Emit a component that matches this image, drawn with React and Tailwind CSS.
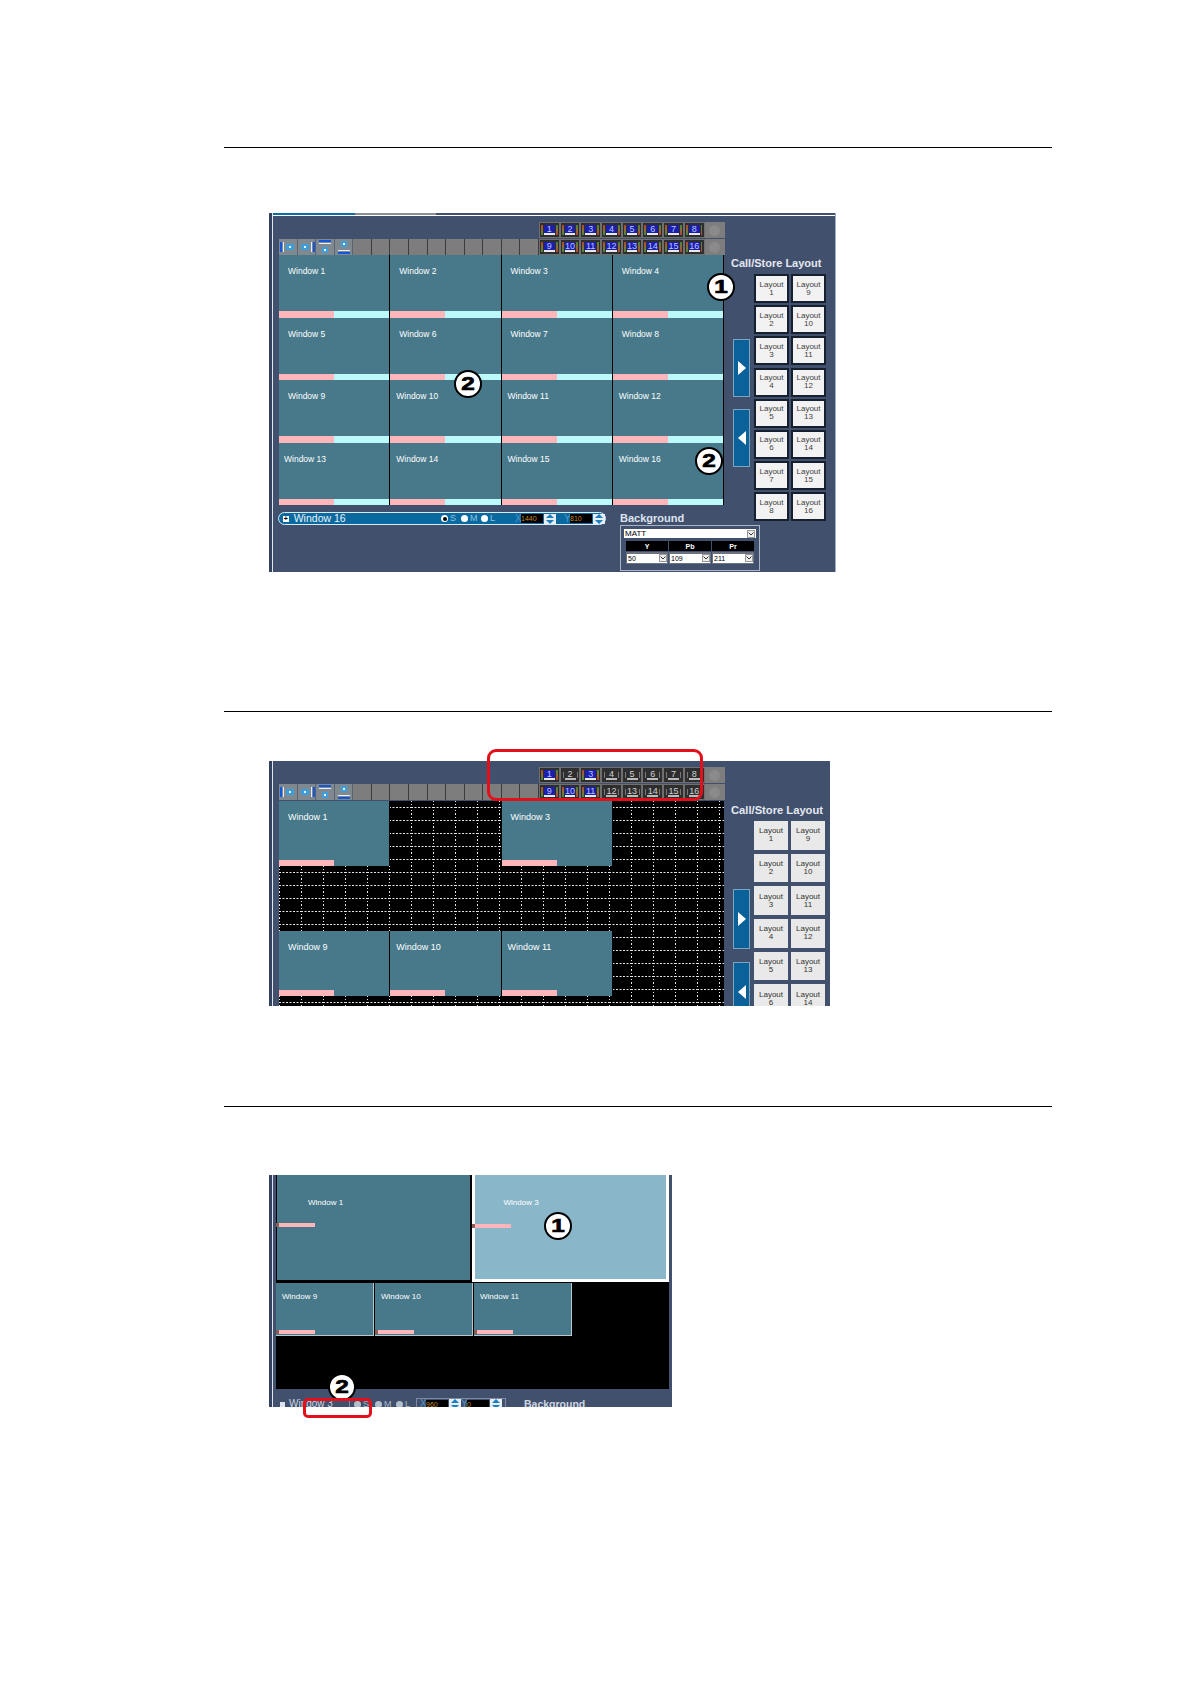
import React from "react";

const NUMS = [1, 2, 3, 4, 5, 6, 7, 8, 9, 10, 11, 12, 13, 14, 15, 16];
const LAYOUTS = [1, 9, 2, 10, 3, 11, 4, 12, 5, 13, 6, 14, 7, 15, 8, 16];

const NumButton = ({ n, active }) => (
  <div className="w-[20.7px] h-[16px] bg-[#6f6f6f] p-px">
    <div className="flex h-full items-stretch justify-center gap-px bg-[#2e2e2e] px-px py-[2px]">
      {active ? (
        <div className="w-[2px] bg-linear-to-b from-[#b8402f] to-[#2f8a3c]" />
      ) : (
        <div className="my-[2px] w-px bg-[#777]" />
      )}
      <div
        className={`flex w-[11px] items-center justify-center border-b-2 text-[9px] leading-none ${
          active ? "border-[#e8e8e8] bg-[#1c1eae] text-[#b9c5ff]" : "border-[#bbb] bg-[#2e2e2e] text-[#d0d0d0]"
        }`}
      >
        {n}
      </div>
      {active ? (
        <div className="w-[2px] bg-linear-to-b from-[#2f8a3c] to-[#b8402f]" />
      ) : (
        <div className="my-[2px] w-px bg-[#777]" />
      )}
    </div>
  </div>
);

const NumGrid = ({ activeSet }) => (
  <div className="grid w-[187px] grid-cols-[repeat(9,20.7px)] gap-y-px">
    {NUMS.slice(0, 8).map((n) => (
      <NumButton key={n} n={n} active={activeSet.includes(n)} />
    ))}
    <GrayKnob />
    {NUMS.slice(8).map((n) => (
      <NumButton key={n} n={n} active={activeSet.includes(n)} />
    ))}
    <GrayKnob />
  </div>
);

const GrayKnob = () => (
  <div className="flex h-[16px] w-[20.7px] items-center justify-center bg-[#7d7d7d]">
    <div className="h-[11px] w-[11px] rounded-full bg-[#8a8a8a]" />
  </div>
);

const ToolIcon = ({ kind }) => (
  <svg width="18" height="16" viewBox="0 0 18 16" className="bg-[#808890]">
    {kind === 0 && (
      <>
        <rect x="1" y="3" width="2" height="10" fill="#1557d8" />
        <rect x="4" y="3" width="1" height="10" fill="#e8eef5" />
        <rect x="7" y="5" width="8" height="6" fill="#3f9ed8" />
        <rect x="10" y="7" width="2" height="2" fill="#e8f4ff" />
      </>
    )}
    {kind === 1 && (
      <>
        <rect x="15" y="3" width="2" height="10" fill="#1557d8" />
        <rect x="13" y="3" width="1" height="10" fill="#e8eef5" />
        <rect x="3" y="5" width="8" height="6" fill="#3f9ed8" />
        <rect x="6" y="7" width="2" height="2" fill="#e8f4ff" />
      </>
    )}
    {kind === 2 && (
      <>
        <rect x="3" y="1" width="12" height="2" fill="#1557d8" />
        <rect x="3" y="4" width="12" height="1" fill="#e8eef5" />
        <rect x="6" y="8" width="6" height="6" fill="#3f9ed8" />
        <rect x="8" y="10" width="2" height="2" fill="#e8f4ff" />
      </>
    )}
    {kind === 3 && (
      <>
        <rect x="6" y="2" width="6" height="6" fill="#3f9ed8" />
        <rect x="8" y="4" width="2" height="2" fill="#e8f4ff" />
        <rect x="3" y="11" width="12" height="1" fill="#e8eef5" />
        <rect x="3" y="13" width="12" height="2" fill="#1557d8" />
      </>
    )}
  </svg>
);

const Toolbar = () => (
  <div className="flex h-[16px] w-[260px] bg-[#7d7d7d]">
    {[0, 1, 2, 3].map((k) => (
      <div key={k} className="h-full w-[18.57px] shrink-0 overflow-hidden border-r border-[#5b6370]">
        <ToolIcon kind={k} />
      </div>
    ))}
    {[...Array(10)].map((_, i) => (
      <div key={i} className="h-full w-[18.57px] shrink-0 border-r border-[#3c3c3c]" />
    ))}
  </div>
);

const WindowCell = ({ name, pad, split, size }) => (
  <div className="flex flex-col justify-between border-r border-black bg-[#47798a]">
    <div className={`pt-[11px] leading-[10px] text-white ${pad} ${size}`}>{name}</div>
    <div className="flex h-[6.5px]">
      <div className="h-full w-1/2 bg-[#ffb6ba]" />
      {split && <div className="h-full w-1/2 bg-[#bcf9fb]" />}
    </div>
  </div>
);

const Triangle = ({ left }) => (
  <svg width="8" height="14" viewBox="0 0 8 14">
    <polygon points={left ? "8,0 0,7 8,14" : "0,0 8,7 0,14"} fill="#fff" />
  </svg>
);

const ArrowButton = ({ left, className }) => (
  <div className={`flex w-[17px] items-center justify-center border border-[#7da4bd] bg-[#0b629b] ${className}`}>
    <Triangle left={left} />
  </div>
);

const LayoutButton = ({ n, dark }) => (
  <div
    className={`flex flex-col items-center justify-center text-[8px] leading-[8px] ${
      dark
        ? "h-[29px] w-[35px] border-2 border-[#16202e] bg-[#f2f2f2] text-[#3f3f3f]"
        : "h-[28.7px] w-[34px] bg-[#e9e9e9] text-[#333]"
    }`}
  >
    <span>Layout</span>
    <span>{n}</span>
  </div>
);

const Spinner = () => (
  <svg width="12" height="10" viewBox="0 0 12 10" className="bg-[#e6eef3]">
    <polygon points="6,0 10,4 2,4" fill="#1b7fc0" />
    <polygon points="2,6 10,6 6,10" fill="#1b7fc0" />
  </svg>
);

const Radio = ({ label, checked, muted }) => (
  <div className="flex items-center gap-[2px]">
    <div
      className={`flex h-[7px] w-[7px] items-center justify-center rounded-full ${
        muted ? "bg-[#b4bfce]" : "bg-white"
      }`}
    >
      {checked && !muted && <div className="h-[4px] w-[4px] rounded-full bg-black" />}
    </div>
    <span className={`w-[8px] text-[9px] leading-none ${muted ? "text-[#aebbcc]" : "text-[#8fc3e0]"}`}>{label}</span>
  </div>
);

const CoordField = ({ label, value }) => (
  <div className="flex items-center">
    <span className="w-[5px] text-[10px] leading-none text-[#4f95c6]">{label}</span>
    <div className="ml-[1px] flex h-[9px] w-[22px] items-center bg-black text-[7px] leading-none text-[#c5892a]">{value}</div>
    <div className="ml-[1px]">
      <Spinner />
    </div>
  </div>
);

const Chevron = () => (
  <div className="flex h-[8px] w-[8px] items-center justify-center border border-[#999] bg-[#eee]">
    <svg width="6" height="4" viewBox="0 0 6 4">
      <polyline points="0.5,0.5 3,3 5.5,0.5" fill="none" stroke="#333" strokeWidth="1" />
    </svg>
  </div>
);

const BackgroundBox = () => (
  <div className="ml-[14px] mt-[8px] w-[140px] shrink-0">
    <div className="text-[11px] font-bold leading-[11px] text-[#dde3ef]">Background</div>
    <div className="mt-[1px] h-[46px] border border-[#a9b4c6] px-[3px] pt-[3px]">
      <div className="flex h-[9px] items-center justify-between bg-white pl-[1px] pr-[1px] text-[8px] leading-none text-black">
        <span>MATT</span>
        <Chevron />
      </div>
      <div className="mt-[3px] grid grid-cols-3 gap-[1px] px-[2px]">
        {["Y", "Pb", "Pr"].map((h) => (
          <div key={h} className="flex h-[10px] items-center justify-center bg-black text-[7px] font-bold leading-none text-white">
            {h}
          </div>
        ))}
        {["50", "109", "211"].map((v) => (
          <div key={v} className="flex h-[12px] items-center bg-[#6b7280] px-[1px]">
            <div className="flex h-[9px] w-full items-center justify-between bg-white pl-[1px] text-[7px] leading-none text-black">
              <span>{v}</span>
              <Chevron />
            </div>
          </div>
        ))}
      </div>
    </div>
  </div>
);

const StatusBar = () => (
  <div className="-ml-px mt-[7px] flex h-[13px] w-[328px] shrink-0 items-center rounded-full border border-[#d7ecf6] bg-[#0a699f] pl-[4px]">
    <div className="flex h-[6px] w-[6px] items-center justify-center bg-white text-[7px] font-bold leading-none text-black">+</div>
    <span className="ml-[5px] w-[155px] text-[10.5px] leading-none text-[#e9f4fa]">Window 16</span>
    <div className="flex gap-[3px]">
      <Radio label="S" checked />
      <Radio label="M" />
      <Radio label="L" />
    </div>
    <div className="ml-[17px] flex gap-[8px]">
      <CoordField label="X" value="1440" />
      <CoordField label="Y" value="810" />
    </div>
  </div>
);

const CallStore = ({ dark, titleClass, arrowTop, firstArrow, secondArrow, gridClass }) => (
  <div className="w-[100px] shrink-0">
    <div className={`whitespace-nowrap font-bold leading-[12px] text-[#e4e8f0] ${titleClass}`}>Call/Store Layout</div>
    <div className="flex">
      <div className={`ml-[2px] w-[17px] shrink-0 ${arrowTop}`}>
        <ArrowButton className={firstArrow} />
        <ArrowButton left className={secondArrow} />
      </div>
      <div className={`ml-[4px] grid shrink-0 grid-cols-[34px_34px] gap-x-[3px] ${gridClass}`}>
        {LAYOUTS.map((n) => (
          <LayoutButton key={n} n={n} dark={dark} />
        ))}
      </div>
    </div>
  </div>
);

const Callout = ({ n, className }) => (
  <div className={`absolute flex h-[28px] w-[28px] items-center justify-center rounded-full border-2 border-black bg-white ${className}`}>
    <span className="inline-block scale-x-[1.35] text-[18px] font-bold leading-none text-black [-webkit-text-stroke:0.7px_black]">{n}</span>
  </div>
);

const PanelEdge = () => (
  <>
    <div className="w-[3px] shrink-0 bg-[#33425f]" />
    <div className="w-px shrink-0 bg-[#dfe6ee]" />
  </>
);

const PanelOne = () => {
  const rows = [
    [["Window 1", "pl-[9px]"], ["Window 2", "pl-[9px]"], ["Window 3", "pl-[9px]"], ["Window 4", "pl-[9px]"]],
    [["Window 5", "pl-[9px]"], ["Window 6", "pl-[9px]"], ["Window 7", "pl-[9px]"], ["Window 8", "pl-[9px]"]],
    [["Window 9", "pl-[9px]"], ["Window 10", "pl-[6px]"], ["Window 11", "pl-[6px]"], ["Window 12", "pl-[6px]"]],
    [["Window 13", "pl-[5px]"], ["Window 14", "pl-[6px]"], ["Window 15", "pl-[6px]"], ["Window 16", "pl-[6px]"]],
  ];
  return (
    <div className="relative ml-[45px] mt-[65px] h-[359px] w-[567px]">
      <div className="flex h-full overflow-hidden border-r border-[#9fb0c4] bg-[#41506d]">
        <PanelEdge />
        <div className="flex min-w-0 flex-1 flex-col">
          <div className="flex h-[2px] shrink-0">
            <div className="ml-0 h-full w-[81px] bg-[#0a6fa6]" />
            <div className="ml-px h-full w-[81px] bg-[#8a8f96]" />
          </div>
          <div className="h-px shrink-0 bg-white" />
          <div className="flex pl-[6px] pt-[6px]">
            <div className="flex w-[452px] shrink-0 flex-col">
              <div className="flex h-[33px] items-end">
                <Toolbar />
                <NumGrid activeSet={NUMS} />
              </div>
              <div className="grid w-[445px] grid-cols-4 grid-rows-[repeat(4,62.5px)]">
                {rows.flat().map(([name, pad]) => (
                  <WindowCell key={name} name={name} pad={pad} split size="text-[8.5px]" />
                ))}
              </div>
              <div className="flex">
                <StatusBar />
                <BackgroundBox />
              </div>
            </div>
            <CallStore
              dark
              titleClass="pt-[35px] text-[11px]"
              arrowTop="pt-[70px]"
              firstArrow="h-[58px]"
              secondArrow="mt-[12px] h-[58px]"
              gridClass="mt-[5px] gap-y-[2.2px]"
            />
          </div>
        </div>
      </div>
      <Callout n="1" className="left-[438px] top-[60px]" />
      <Callout n="2" className="left-[185px] top-[157px]" />
      <Callout n="2" className="left-[426px] top-[234px]" />
    </div>
  );
};

const DotGrid = () => (
  <svg className="absolute inset-0 h-full w-full">
    <defs>
      <pattern id="dots" width="22" height="13" patternUnits="userSpaceOnUse">
        <line x1="0.5" y1="0" x2="0.5" y2="13" stroke="#e6e6e6" strokeDasharray="1 2" />
        <line x1="0" y1="6.5" x2="22" y2="6.5" stroke="#e6e6e6" strokeDasharray="2 1.5" />
      </pattern>
    </defs>
    <rect width="100%" height="100%" fill="url(#dots)" />
  </svg>
);

const PanelTwo = () => {
  const cells = [
    ["Window 1", "pl-[9px]"], null, ["Window 3", "pl-[9px]"], null,
    null, null, null, null,
    ["Window 9", "pl-[9px]"], ["Window 10", "pl-[6px]"], ["Window 11", "pl-[6px]"], null,
  ];
  return (
    <div className="relative ml-[45px] mt-[49px] h-[245px] w-[561px]">
      <div className="flex h-full overflow-hidden bg-[#41506d]">
        <PanelEdge />
        <div className="flex pl-[6px] pt-[6px]">
          <div className="flex w-[452px] shrink-0 flex-col">
            <div className="flex h-[34px] items-start">
              <div className="mt-[17px]">
                <Toolbar />
              </div>
              <NumGrid activeSet={[1, 3, 9, 10, 11]} />
            </div>
            <div className="relative h-[205px] w-[445px] overflow-hidden bg-black">
              <DotGrid />
              <div className="relative grid grid-cols-4 auto-rows-[65px]">
                {cells.map((c, i) =>
                  c ? <WindowCell key={c[0]} name={c[0]} pad={c[1]} size="text-[9px]" /> : <div key={i} />
                )}
              </div>
            </div>
          </div>
          <CallStore
            titleClass="pt-[37px] text-[11.2px]"
            arrowTop="pt-[73px]"
            firstArrow="h-[60px]"
            secondArrow="mt-[13px] h-[60px]"
            gridClass="mt-[5px] gap-y-[4px]"
          />
        </div>
      </div>
      <div className="absolute left-[218px] top-[-12px] h-[52px] w-[216px] rounded-[9px] border-[3px] border-[#e3101c]" />
    </div>
  );
};

const SmallWindow = ({ name, className, barClass }) => (
  <div className={`flex flex-col ${className}`}>
    <div className="text-[8px] leading-[10px] text-white">{name}</div>
    <div className={`mt-auto flex h-[4px] w-[39px] bg-[#ffb6ba] ${barClass}`}>
      <div className="h-full w-[3px] bg-[#8a5f55]" />
    </div>
  </div>
);

const PanelThree = () => (
  <div className="relative ml-[45px] mt-[68px] h-[232px] w-[403px]">
    <div className="flex h-full overflow-hidden bg-[#41506d]">
      <PanelEdge />
      <div className="flex min-w-0 flex-1 flex-col">
        <div className="ml-[3px] mr-[3px] h-[214px] shrink-0 bg-black">
          <div className="flex h-[107px] gap-[2px] pl-px">
            <SmallWindow
              name="Window 1"
              className="h-[105px] w-[193px] bg-[#47798a] pl-[31px] pt-[23px] pb-[53px]"
              barClass="-ml-[32px]"
            />
            <SmallWindow
              name="Window 3"
              className="h-[107px] w-[198px] border-[3px] border-t-0 border-white bg-[#89b6c9] pl-[29px] pt-[23px] pb-[51px]"
              barClass="-ml-[32px]"
            />
          </div>
          <div className="mt-px flex h-[53px] gap-px">
            {["Window 9", "Window 10", "Window 11"].map((w) => (
              <SmallWindow
                key={w}
                name={w}
                className="w-[98px] border-r border-b border-[#b9c7cf] bg-[#47798a] pl-[6px] pt-[9px] pb-px"
                barClass="-ml-[6px]"
              />
            ))}
          </div>
        </div>
        <div className="mt-[9px] flex h-[12px] shrink-0 items-center overflow-visible pl-[7px] text-[#cfd6e2]">
          <div className="h-[5px] w-[5px] bg-[#dde3ef]" />
          <span className="ml-[4px] w-[50px] text-[10px] leading-none">Window 3</span>
          <div className="ml-[10px] flex gap-[4px] border-l border-[#7f8aa0] pl-[4px]">
            <Radio label="S" checked muted />
            <Radio label="M" muted />
            <Radio label="L" muted />
          </div>
          <div className="ml-[3px] flex border border-[#7f8aa0] px-[3px]">
            <CoordField label="X" value="960" />
            <CoordField label="Y" value="0" />
          </div>
          <span className="ml-[18px] text-[10.5px] font-bold leading-none">Background</span>
        </div>
      </div>
    </div>
    <Callout n="1" className="left-[275px] top-[37px]" />
    <Callout n="2" className="left-[59px] top-[198px]" />
    <div className="absolute left-[34px] top-[223px] h-[20px] w-[69px] rounded-[5px] border-[3px] border-[#e3101c]" />
  </div>
);

const App = () => {
  return (
    <div className="h-[1684px] w-[1191px] overflow-hidden bg-white pl-[224px] pt-[147px] font-['Liberation_Sans',Arial,sans-serif]">
      <div className="w-[828px] border-t border-black" />
      <PanelOne />
      <div className="mt-[139px] w-[828px] border-t border-black" />
      <PanelTwo />
      <div className="mt-[100px] w-[828px] border-t border-black" />
      <PanelThree />
    </div>
  );
};

export default App;
